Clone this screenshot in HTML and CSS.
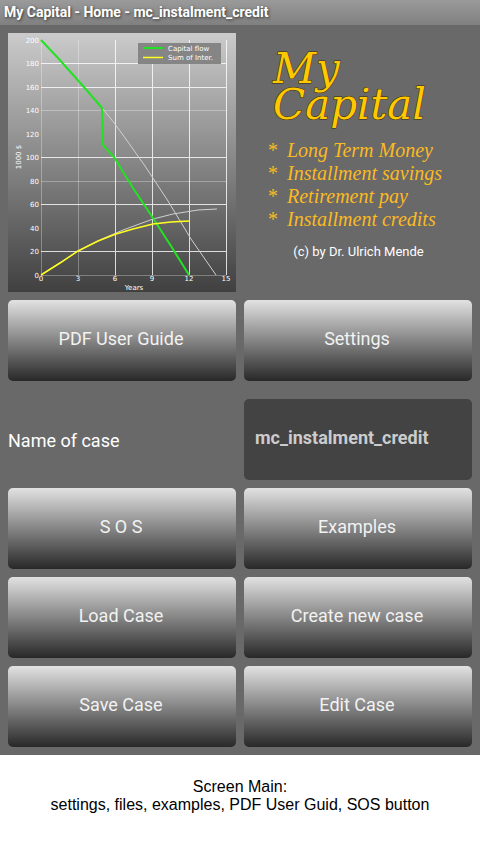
FILE: index.html
```
<!DOCTYPE html>
<html lang="en">

<head>
  <meta charset="UTF-8">
  <meta name="viewport" content="width=device-width, initial-scale=1.0">
  <title>My Capital - Home</title>
  <link rel="stylesheet" href="styles.css">
</head>

<body>
  <div class="app">
    <header class="title-bar">My Capital - Home - mc_instalment_credit</header>

    <main class="grid">
      <svg class="chart" viewBox="0 0 228 259" role="img" aria-label="Capital flow chart">
        <defs>
          <linearGradient id="chart-bg" x1="0" y1="0" x2="0" y2="1">
            <stop offset="0" stop-color="#cbcbcb" />
            <stop offset="0.5" stop-color="#868686" />
            <stop offset="1" stop-color="#404040" />
          </linearGradient>
        </defs>
        <rect width="228" height="259" fill="url(#chart-bg)" />

        <!-- grid lines -->
        <g class="faint">
          <path d="M33.5 7V242M70.5 7V242M33 77.5H218M33 148.5H218M33 242.5H218" />
        </g>
        <g class="lines">
          <path d="M107.5 7V242M144.5 7V242M181.5 7V242M218.5 7V242" />
          <path d="M33 30.5H218M33 54.5H218M33 124.5H218M33 171.5H218M33 218.5H218" />
        </g>

        <!-- curves -->
        <path class="thin" d="M95 76L107 91L120 109L137 133L160 168L183 206L208 242" />
        <path class="thin" d="M33 242L70 218L94 206L115 197L145 186L165 181L190 177L209 176" />
        <path class="flow" d="M33 7L50 25L75 53L94 75L95 112L106 124L125 155L145 185L163 213L181 242" />
        <path class="interest" d="M33 242L52 230L70 218L90 208L108 201L125 196L145 191L163 189L181 188" />

        <!-- legend -->
        <rect x="130" y="10" width="83" height="21" fill="#858585" />
        <path class="flow" d="M135 15H155" />
        <path class="interest" d="M135 24.5H155" />
        <g class="labels">
          <text x="160" y="18">Capital flow</text>
          <text x="160" y="27">Sum of Inter.</text>
        </g>

        <!-- axis labels -->
        <g class="labels end">
          <text x="31" y="10">200</text>
          <text x="31" y="33">180</text>
          <text x="31" y="57">160</text>
          <text x="31" y="80">140</text>
          <text x="31" y="104">120</text>
          <text x="31" y="127">100</text>
          <text x="31" y="151">80</text>
          <text x="31" y="174">60</text>
          <text x="31" y="198">40</text>
          <text x="31" y="221">20</text>
          <text x="31" y="245">0</text>
        </g>
        <g class="labels middle">
          <text x="33" y="248">0</text>
          <text x="70" y="248">3</text>
          <text x="107" y="248">6</text>
          <text x="144" y="248">9</text>
          <text x="181" y="248">12</text>
          <text x="218" y="248">15</text>
          <text x="126" y="257">Years</text>
          <text x="13" y="124" transform="rotate(-90 13 124)">1000 $</text>
        </g>
      </svg>

      <section class="about">
        <h1 class="logo">My<br>Capital</h1>
        <ul class="features">
          <li><span>*</span>Long Term Money</li>
          <li><span>*</span>Installment savings</li>
          <li><span>*</span>Retirement pay</li>
          <li><span>*</span>Installment credits</li>
        </ul>
        <p class="copyright">(c) by Dr. Ulrich Mende</p>
      </section>

      <button type="button">PDF User Guide</button>
      <button type="button">Settings</button>

      <label class="case-label" for="case-name">Name of case</label>
      <input class="case-name" id="case-name" type="text" value="mc_instalment_credit">

      <button type="button">S O S</button>
      <button type="button">Examples</button>
      <button type="button">Load Case</button>
      <button type="button">Create new case</button>
      <button type="button">Save Case</button>
      <button type="button">Edit Case</button>
    </main>
  </div>

  <p class="caption">Screen Main:<br>settings, files, examples, PDF User Guid, SOS button</p>
</body>

</html>
```
FILE: styles.css
```
body {
  margin: 0;
  font-family: Roboto, sans-serif;
  background-color: white;
}

.app {
  background-color: #696969;
}

.title-bar {
  padding: 0 4px;
  font-size: 14px;
  font-weight: bold;
  line-height: 25px;
  color: white;
  background: linear-gradient(#9a9a9a, #808080);
  text-shadow: 1px 1px 3px #333;
}

.grid {
  display: grid;
  grid-template-columns: 1fr 1fr;
  gap: 8px;
  padding: 8px;
}

.chart {
  display: block;
  width: 100%;
}

.chart path {
  fill: none;
}

.faint {
  stroke: white;
  opacity: 0.3;
}

.lines {
  stroke: white;
  opacity: 0.8;
}

.thin {
  stroke: #d0d0d0;
}

.flow {
  stroke: #22e222;
  stroke-width: 2;
}

.interest {
  stroke: #ffff20;
  stroke-width: 1.5;
}

.labels {
  font-family: "DejaVu Sans", sans-serif;
  font-size: 7px;
  fill: white;
}

.end {
  text-anchor: end;
}

.middle {
  text-anchor: middle;
}

.about {
  padding: 18px 0 0 23px;
}

.logo {
  margin: 0;
  padding-left: 6px;
  font-family: "DejaVu Serif", serif;
  font-size: 42px;
  font-style: italic;
  font-weight: normal;
  line-height: 36px;
  color: #ffc800;
  -webkit-text-stroke: 1px #3a2c00;
  paint-order: stroke fill;
}

.features {
  margin: 16px 0 0;
  padding: 0;
  list-style: none;
  font-family: "Liberation Serif", serif;
  font-size: 20px;
  font-style: italic;
  line-height: 23px;
  color: #fbba21;
}

.features li {
  display: flex;
  gap: 10px;
}

.copyright {
  margin: 13px 0 0;
  padding-right: 22px;
  text-align: center;
  font-size: 13px;
  line-height: 16px;
  color: white;
}

button {
  height: 81px;
  padding: 0 2px 4px 0;
  border: none;
  border-radius: 5px;
  font-family: inherit;
  font-size: 18px;
  color: #f2f2f2;
  background: linear-gradient(#e2e2e2, #858585 50%, #282828);
  cursor: pointer;
}

.case-label {
  padding-top: 12px;
  font-size: 18px;
  line-height: 79px;
  color: white;
}

.case-name {
  box-sizing: border-box;
  width: 100%;
  height: 81px;
  margin-top: 10px;
  padding: 0 11px 4px;
  border: none;
  border-radius: 5px;
  font-family: inherit;
  font-size: 18px;
  font-weight: bold;
  color: #ccc;
  background-color: #434343;
}

.caption {
  margin: 23px 0;
  text-align: center;
  font-family: "Liberation Sans", Arial, sans-serif;
  font-size: 16px;
  line-height: 18px;
  color: black;
}
```
